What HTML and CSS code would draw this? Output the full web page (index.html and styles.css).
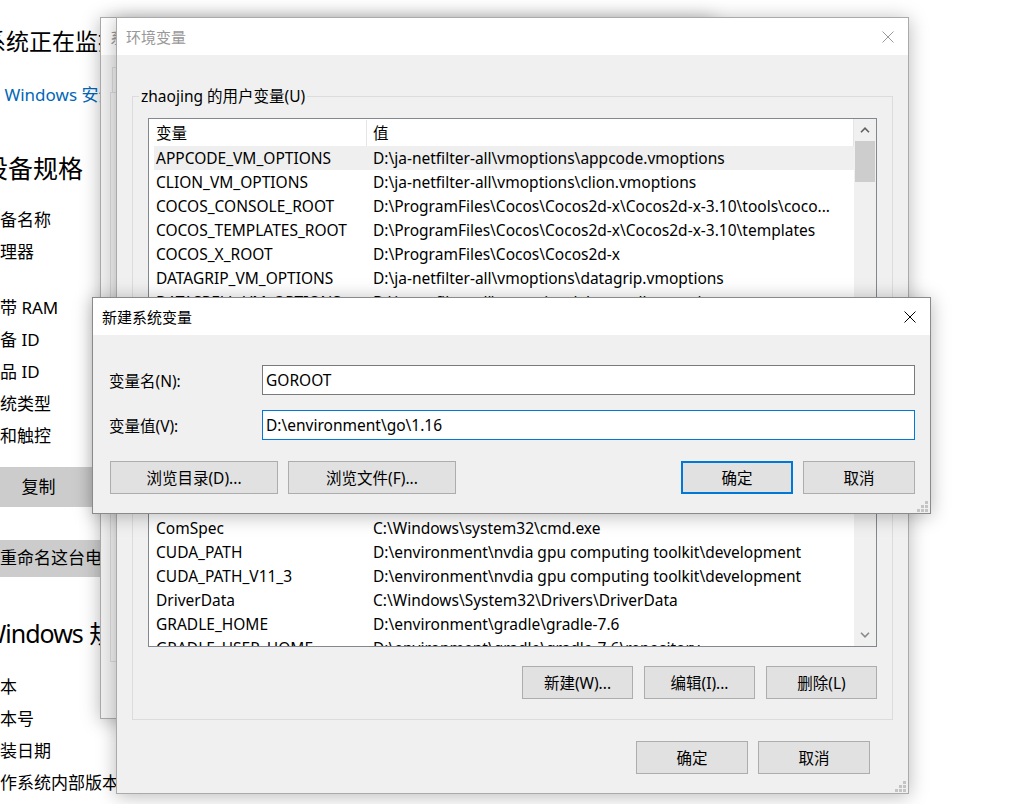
FILE: index.html
```html
<!DOCTYPE html>
<html lang="zh-CN">
<head>
    <meta charset="UTF-8">
    <meta name="viewport" content="width=device-width, initial-scale=1.0">
    <title>环境变量</title>
    <link rel="stylesheet" href="styles.css">
</head>
<body>
    <!-- 背景：设置 - 关于 -->
    <div class="about">
        <p class="about-tip">系统正在监控并保护你的电脑。</p>
        <a class="about-link" href="javascript:;">在 Windows 安全中心中查看详细信息</a>
        <h2 class="about-title">设备规格</h2>
        <ul class="spec-list">
            <li>设备名称</li>
            <li class="two-line">处理器</li>
            <li>机带 RAM</li>
            <li>设备 ID</li>
            <li>产品 ID</li>
            <li>系统类型</li>
            <li>笔和触控</li>
        </ul>
        <div class="about-btn">复制</div>
        <div class="about-bar">重命名这台电脑</div>
        <h2 class="about-title second"><span class="latin">Windows</span> 规格</h2>
        <ul class="spec-list second">
            <li>版本</li>
            <li>版本号</li>
            <li>安装日期</li>
            <li>操作系统内部版本</li>
        </ul>
    </div>

    <!-- 系统属性（最底层） -->
    <div class="win win-sys">
        <div class="win-title inactive"><span>系统属性</span></div>
        <div class="win-body sys-body">
            <div class="sys-tab"></div>
            <div class="sys-panel"></div>
        </div>
    </div>

    <!-- 环境变量 -->
    <div class="win win-env">
        <div class="win-title inactive">
            <span>环境变量</span>
            <svg class="win-close" viewBox="0 0 12 12"><path d="M0.5 0.5L11.5 11.5M11.5 0.5L0.5 11.5" stroke="currentColor" stroke-width="1"/></svg>
        </div>
        <div class="win-body env-body">
            <div class="group">
                <span class="group-label">zhaojing 的用户变量(U)</span>
                <div class="var-list">
                    <div class="var-main">
                        <div class="var-head"><span class="col-name">变量</span><span class="col-value">值</span></div>
                        <div class="var-row selected"><span>APPCODE_VM_OPTIONS</span><span>D:\ja-netfilter-all\vmoptions\appcode.vmoptions</span></div>
                        <div class="var-row"><span>CLION_VM_OPTIONS</span><span>D:\ja-netfilter-all\vmoptions\clion.vmoptions</span></div>
                        <div class="var-row"><span>COCOS_CONSOLE_ROOT</span><span>D:\ProgramFiles\Cocos\Cocos2d-x\Cocos2d-x-3.10\tools\coco...</span></div>
                        <div class="var-row"><span>COCOS_TEMPLATES_ROOT</span><span>D:\ProgramFiles\Cocos\Cocos2d-x\Cocos2d-x-3.10\templates</span></div>
                        <div class="var-row"><span>COCOS_X_ROOT</span><span>D:\ProgramFiles\Cocos\Cocos2d-x</span></div>
                        <div class="var-row"><span>DATAGRIP_VM_OPTIONS</span><span>D:\ja-netfilter-all\vmoptions\datagrip.vmoptions</span></div>
                        <div class="var-row"><span>DATASPELL_VM_OPTIONS</span><span>D:\ja-netfilter-all\vmoptions\dataspell.vmoptions</span></div>
                        <div class="var-row"><span>DEVECOSTUDIO_VM_OPTIONS</span><span>D:\ja-netfilter-all\vmoptions\devecostudio.vmoptions</span></div>
                        <div class="var-row"><span>GATEWAY_VM_OPTIONS</span><span>D:\ja-netfilter-all\vmoptions\gateway.vmoptions</span></div>
                        <div class="var-row"><span>GOLAND_VM_OPTIONS</span><span>D:\ja-netfilter-all\vmoptions\goland.vmoptions</span></div>
                        <div class="var-row"><span>IDEA_VM_OPTIONS</span><span>D:\ja-netfilter-all\vmoptions\idea.vmoptions</span></div>
                        <div class="var-row"><span>JETBRAINSCLIENT_VM_OPTIONS</span><span>D:\ja-netfilter-all\vmoptions\jetbrainsclient.vmoptions</span></div>
                        <div class="var-row"><span>OneDrive</span><span>C:\Users\zhaojing\OneDrive</span></div>
                        <div class="var-row"><span>Path</span><span>C:\Users\zhaojing\AppData\Local\Microsoft\WindowsApps</span></div>
                        <div class="var-row"><span>TEMP</span><span>C:\Users\zhaojing\AppData\Local\Temp</span></div>
                        <div class="var-row gap"><span>ComSpec</span><span>C:\Windows\system32\cmd.exe</span></div>
                        <div class="var-row"><span>CUDA_PATH</span><span>D:\environment\nvdia gpu computing toolkit\development</span></div>
                        <div class="var-row"><span>CUDA_PATH_V11_3</span><span>D:\environment\nvdia gpu computing toolkit\development</span></div>
                        <div class="var-row"><span>DriverData</span><span>C:\Windows\System32\Drivers\DriverData</span></div>
                        <div class="var-row"><span>GRADLE_HOME</span><span>D:\environment\gradle\gradle-7.6</span></div>
                        <div class="var-row"><span>GRADLE_USER_HOME</span><span>D:\environment\gradle\gradle-7.6\repository</span></div>
                    </div>
                    <div class="scrollbar">
                        <div class="arrow">
                            <svg width="10" height="6" viewBox="0 0 10 6"><path d="M1 5.2L5 1.2L9 5.2" fill="none" stroke="#606060" stroke-width="1.6"/></svg>
                        </div>
                        <div class="thumb"></div>
                        <div class="track"></div>
                        <div class="arrow">
                            <svg width="10" height="6" viewBox="0 0 10 6"><path d="M1 0.8L5 4.8L9 0.8" fill="none" stroke="#8a8a8a" stroke-width="1.6"/></svg>
                        </div>
                    </div>
                </div>
                <div class="btn-row">
                    <button>新建(W)...</button>
                    <button>编辑(I)...</button>
                    <button>删除(L)</button>
                </div>
            </div>
            <div class="btn-row env-foot">
                <button class="wide-112">确定</button>
                <button class="wide-112">取消</button>
            </div>
        </div>
        <svg class="grip" viewBox="0 0 11 11"><path d="M8 0h3v3H8zM4 4h3v3H4zM8 4h3v3H8zM0 8h3v3H0zM4 8h3v3H4zM8 8h3v3H8z" fill="#c4c4c4"/></svg>
    </div>

    <!-- 新建系统变量 -->
    <div class="win win-new">
        <div class="win-title">
            <span>新建系统变量</span>
            <svg class="win-close" viewBox="0 0 12 12"><path d="M0.5 0.5L11.5 11.5M11.5 0.5L0.5 11.5" stroke="currentColor" stroke-width="1"/></svg>
        </div>
        <div class="win-body new-body">
            <div class="field-grid">
                <label for="var-name">变量名(N):</label>
                <input id="var-name" class="field" type="text" value="GOROOT" readonly>
                <label for="var-value">变量值(V):</label>
                <input id="var-value" class="field focus" type="text" value="D:\environment\go\1.16" readonly>
            </div>
            <div class="btn-row new-btns">
                <button class="wide">浏览目录(D)...</button>
                <button class="wide">浏览文件(F)...</button>
                <span class="spacer"></span>
                <button class="wide-112 default">确定</button>
                <button class="wide-112">取消</button>
            </div>
        </div>
        <svg class="grip" viewBox="0 0 11 11"><path d="M8 0h3v3H8zM4 4h3v3H4zM8 4h3v3H8zM0 8h3v3H0zM4 8h3v3H4zM8 8h3v3H8z" fill="#c4c4c4"/></svg>
    </div>
</body>
</html>
```

FILE: styles.css
```css
*{
    margin: 0;
    padding: 0;
    box-sizing: border-box;
}
ul,li{
    list-style: none;
}
body{
    position: relative;
    width: 1036px;
    height: 804px;
    overflow: hidden;
    background: #fff;
    color: #000;
    font-family: "Noto Sans", "Noto Sans CJK SC", sans-serif;
}

/* 设置页（被窗口挡住左边一截） */
.about{
    margin-left: -17px;
    padding-top: 25px;
    white-space: nowrap;
}
.about-tip{
    font-size: 23px;
    line-height: 32px;
}
.about-link{
    display: block;
    margin-top: 26px;
    font-size: 17px;
    line-height: 24px;
    color: #0067b8;
    text-decoration: none;
}
.about-title{
    margin-top: 43px;
    font-size: 25px;
    line-height: 36px;
    font-weight: normal;
}
.about-title.second{
    margin-top: 38px;
}
.about-title .latin{
    letter-spacing: -1px;
}
.spec-list{
    margin-top: 18px;
    font-size: 17px;
    line-height: 32px;
}
.spec-list.second{
    margin-top: 20px;
}
.spec-list .two-line{
    height: 56px;
}
.about-btn{
    width: 111px;
    height: 40px;
    margin-top: 15px;
    line-height: 40px;
    text-align: center;
    font-size: 17px;
    background: #ccc;
}
.about-bar{
    width: 300px;
    height: 37px;
    margin-top: 33px;
    padding-left: 17px;
    line-height: 35px;
    font-size: 17px;
    background: #ccc;
}

/* 窗口通用 */
.win{
    position: absolute;
    display: flex;
    flex-direction: column;
    background: #f0f0f0;
    border: 1px solid #aaa;
    box-shadow: 0 2px 18px rgba(0,0,0,0.28);
}
.win-title{
    flex: none;
    display: flex;
    align-items: center;
    justify-content: space-between;
    height: 37px;
    padding: 0 14px 0 9px;
    background: #fff;
    font-size: 15px;
}
.win-title.inactive{
    color: #999;
}
.win-close{
    width: 12px;
    height: 12px;
}
.win-body{
    flex: 1;
}
.grip{
    position: absolute;
    right: 2px;
    bottom: 1px;
    width: 11px;
    height: 11px;
}
button{
    width: 111px;
    height: 33px;
    font-family: inherit;
    font-size: 15.5px;
    color: #000;
    background: #e1e1e1;
    border: 1px solid #adadad;
}
button.wide-112{
    width: 112px;
}
button.wide{
    width: 168px;
}
button.default{
    border: 2px solid #0078d7;
}
.btn-row{
    display: flex;
    justify-content: flex-end;
    gap: 11px;
}

/* 系统属性 */
.win-sys{
    left: 100px;
    top: 17px;
    width: 614px;
    height: 702px;
}
.sys-body{
    padding: 12px 0 0 9px;
}
.sys-tab{
    width: 90px;
    height: 25px;
    margin-left: 2px;
    border: 1px solid #d9d9d9;
    border-bottom: none;
}
.sys-panel{
    width: 592px;
    height: 570px;
    border: 1px solid #d9d9d9;
}

/* 环境变量 */
.win-env{
    left: 116px;
    top: 17px;
    width: 793px;
    height: 777px;
}
.env-body{
    padding: 41px 15px 0;
}
.group{
    border: 1px solid #dcdcdc;
    padding: 0 15px 20px;
}
.group-label{
    display: block;
    width: fit-content;
    margin: -12px 0 11px -9px;
    padding: 0 2px;
    line-height: 22px;
    font-size: 15.5px;
    background: #f0f0f0;
}
.var-list{
    display: flex;
    height: 529px;
    margin-bottom: 19px;
    border: 1px solid #828790;
    background: #fff;
    overflow: hidden;
    font-size: 15.5px;
}
.var-main{
    flex: 1;
    overflow: hidden;
}
.var-head{
    display: flex;
    align-items: center;
    height: 27px;
    padding-left: 5px;
    border-right: 1px solid #e5e5e5;
}
.var-head .col-name{
    width: 213px;
    padding-left: 2px;
    line-height: 26px;
    border-right: 1px solid #e5e5e5;
}
.var-head .col-value{
    padding-left: 6px;
}
.var-row{
    display: grid;
    grid-template-columns: 213px 1fr;
    height: 24px;
    margin-left: 5px;
    line-height: 24px;
    white-space: nowrap;
    overflow: hidden;
}
.var-row span:first-child{
    padding-left: 2px;
}
.var-row span:last-child{
    padding-left: 6px;
}
.var-row.selected{
    background: #efefef;
}
.var-row.gap{
    margin-top: 10px;
}
.scrollbar{
    flex: none;
    display: flex;
    flex-direction: column;
    align-items: center;
    width: 22px;
    background: #f0f0f0;
}
.scrollbar .arrow{
    display: flex;
    align-items: center;
    justify-content: center;
    width: 22px;
    height: 22px;
}
.scrollbar .thumb{
    width: 20px;
    height: 41px;
    background: #cdcdcd;
}
.scrollbar .track{
    flex: 1;
}
.env-foot{
    gap: 10px;
    margin: 21px 23px 0 0;
}

/* 新建系统变量 */
.win-new{
    left: 92px;
    top: 297px;
    width: 839px;
    height: 217px;
    border-color: #8a8a8a;
}
.new-body{
    padding: 30px 15px 0 16px;
}
.field-grid{
    display: grid;
    grid-template-columns: 153px 1fr;
    grid-template-rows: 30px 30px;
    row-gap: 15px;
    align-items: center;
    font-size: 15.5px;
}
.field{
    height: 30px;
    padding: 0 3px;
    font-family: inherit;
    font-size: 15.5px;
    color: #000;
    background: #fff;
    border: 1px solid #7a7a7a;
    outline: none;
}
.field.focus{
    border-color: #0078d7;
}
.new-btns{
    gap: 10px;
    margin: 21px 0 0 1px;
}
.new-btns .spacer{
    flex: 1;
}
```
